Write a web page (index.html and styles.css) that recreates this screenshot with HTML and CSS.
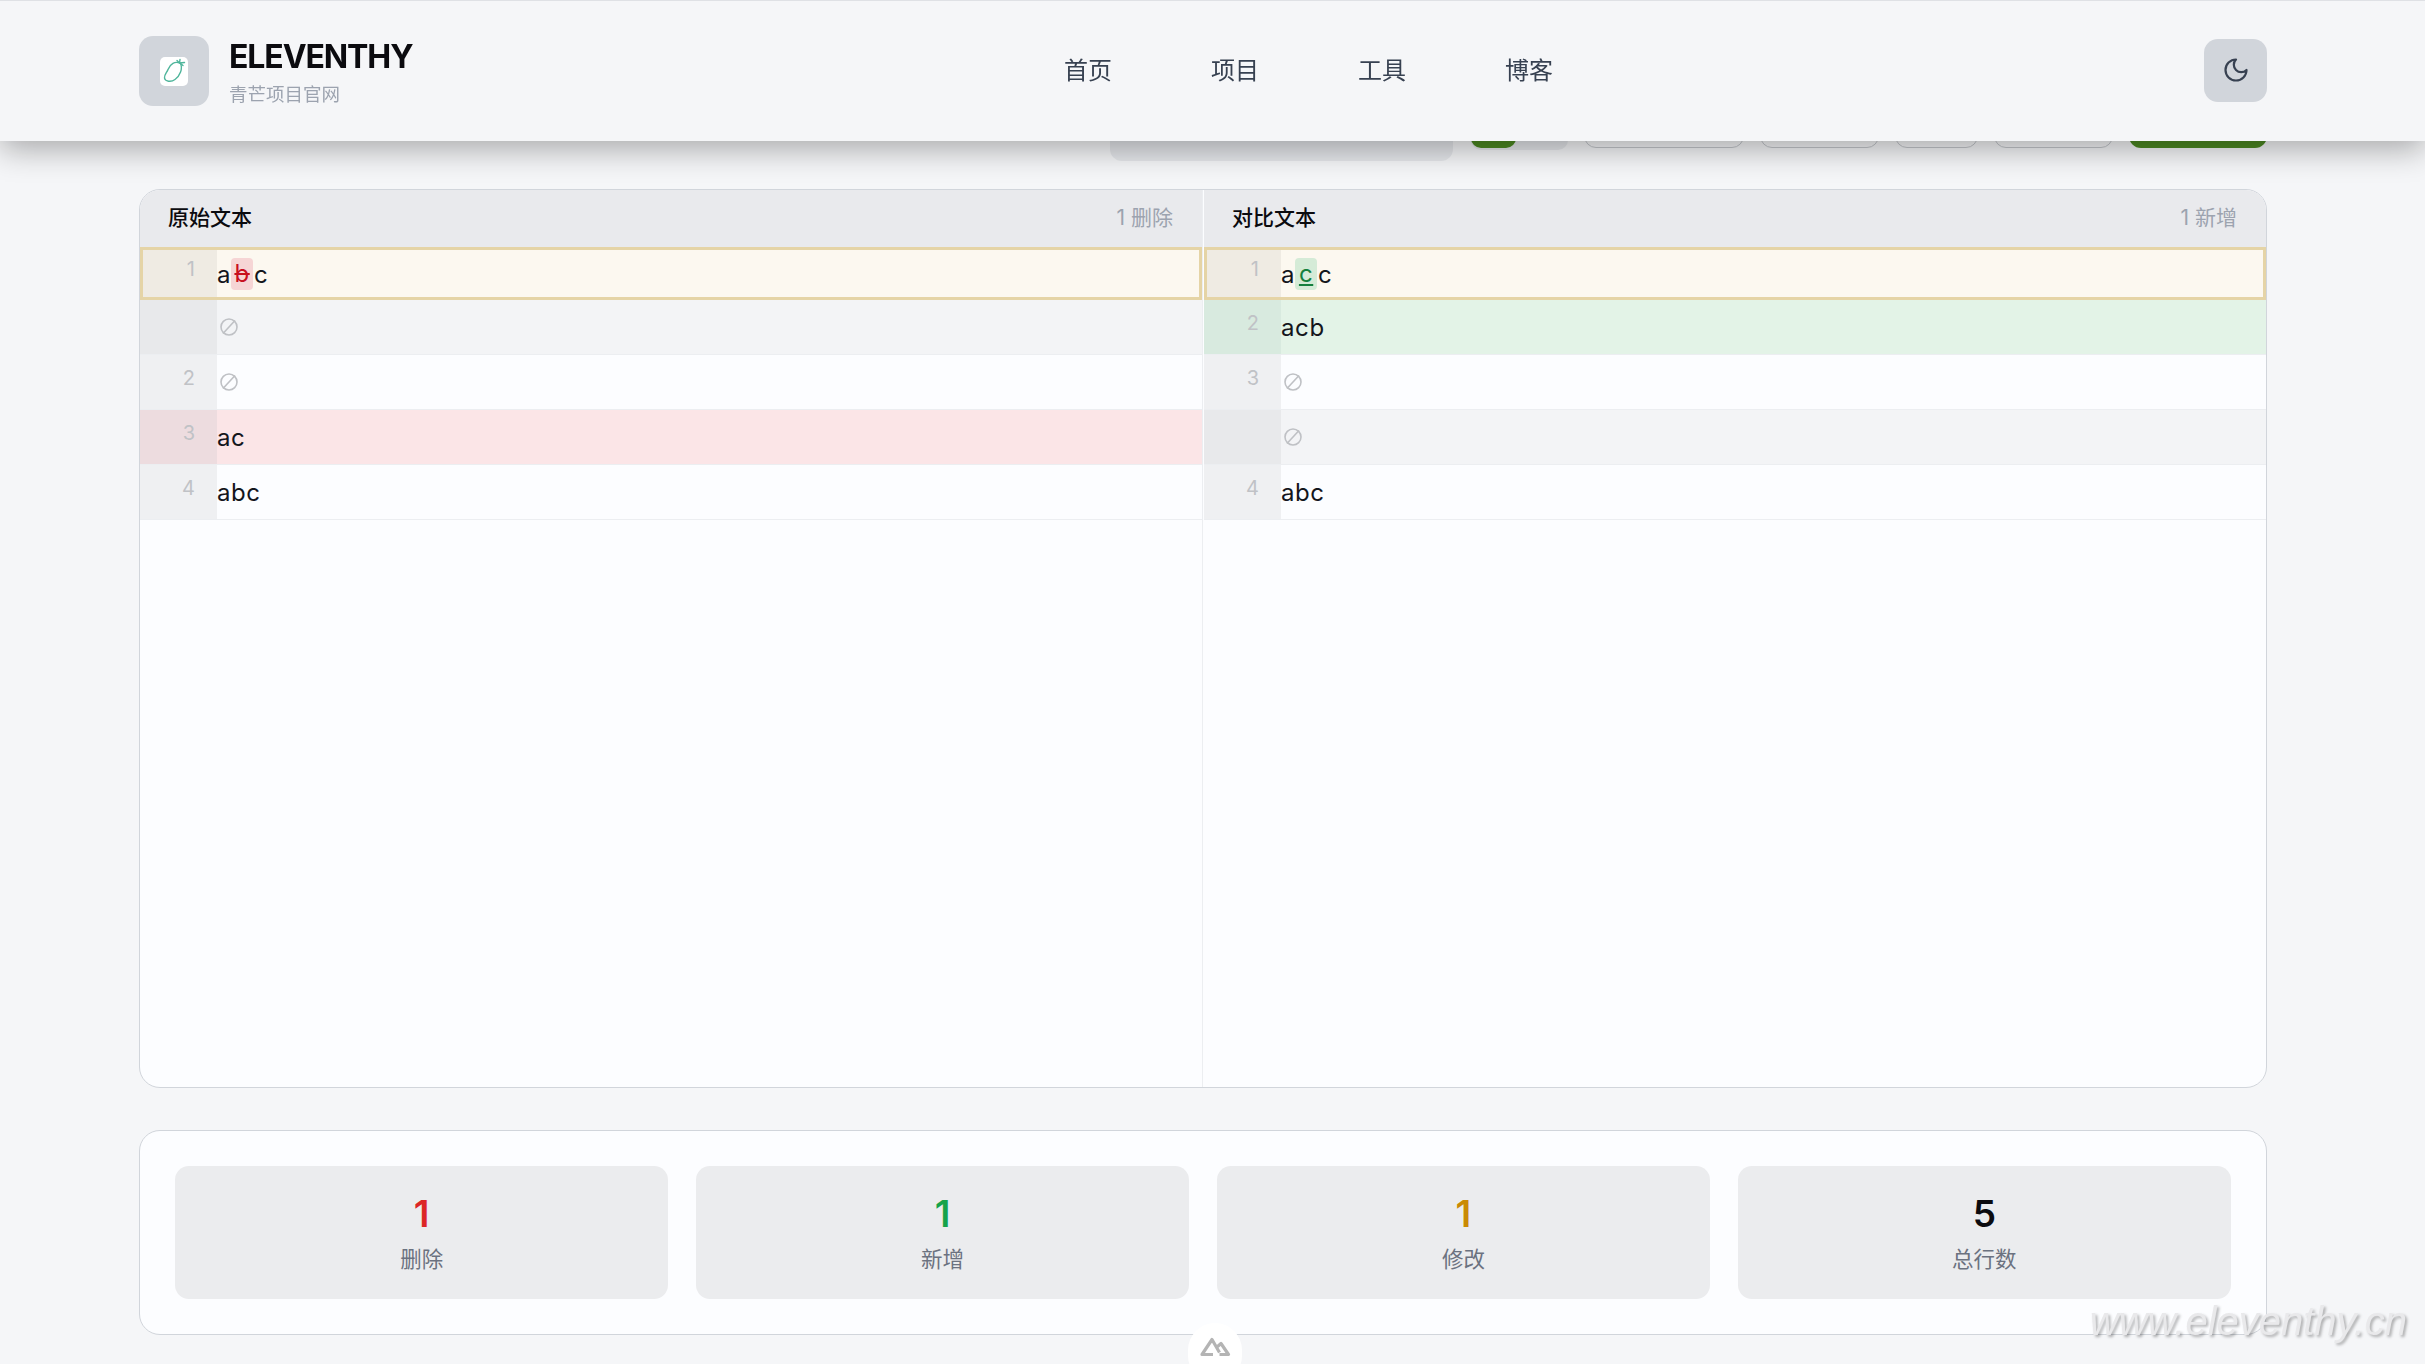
FILE: index.html
```html
<!DOCTYPE html>
<html lang="zh-CN">
<head>
  <meta charset="UTF-8">
  <meta name="viewport" content="width=device-width, initial-scale=1.0">
  <title>文本对比 - ELEVENTHY</title>
  <link rel="stylesheet" href="styles.css">
</head>
<body>

<header class="site-header">
  <div class="brand">
    <div class="logo">
      <span class="logo-tile">
        <svg viewBox="0 0 28 28" width="28" height="28" fill="none" stroke="#4fb59b" stroke-width="1.4" stroke-linecap="round" stroke-linejoin="round">
          <path d="M20.5 6.5C15 3.5 10 7 8 12.5c-1 3-4 5.500-3.500 8.500.5 3.500 6.500 4.500 10.500 1.500 5-3.500 8-11 5.500-16z"/>
          <path d="M17 3.500l2.500 2.500 5-.5M20 6l3 2.500M19.500 6l.5-3.500"/>
        </svg>
      </span>
    </div>
    <div class="brand-text">
      <div class="brand-name">ELEVENTHY</div>
      <div class="brand-sub">青芒项目官网</div>
    </div>
  </div>
  <nav class="nav">
    <a>首页</a>
    <a>项目</a>
    <a>工具</a>
    <a>博客</a>
  </nav>
  <button class="theme-btn">
    <svg viewBox="0 0 24 24" width="28" height="28" fill="none" stroke="#374151" stroke-width="1.900" stroke-linecap="round" stroke-linejoin="round">
      <path d="M12 3a6 6 0 0 0 9 9 9 9 0 1 1-9-9Z"/>
    </svg>
  </button>
</header>

<main class="page">
  <!-- toolbar, mostly under the header -->
  <div class="toolbar">
    <div class="tb-select"></div>
    <div class="tb-switch"><span class="tb-on"></span><span class="tb-off"></span></div>
    <div class="tb-pill w160"></div>
    <div class="tb-pill w119"></div>
    <div class="tb-pill w83"></div>
    <div class="tb-pill w119"></div>
    <div class="tb-primary"></div>
  </div>

  <section class="diff">
    <div class="diff-col">
      <div class="diff-head">
        <span class="diff-title">原始文本</span>
        <span class="diff-count">1 删除</span>
      </div>
      <div class="row modified"><span class="num">1</span><span class="code">a<del class="del">b</del>c</span></div>
      <div class="row empty"><span class="num"></span><span class="code"><svg class="none" viewBox="0 0 18 18"><circle cx="9" cy="9" r="8"/><path d="M3 15.500 15 2.500"/></svg></span></div>
      <div class="row"><span class="num">2</span><span class="code"><svg class="none" viewBox="0 0 18 18"><circle cx="9" cy="9" r="8"/><path d="M3 15.500 15 2.500"/></svg></span></div>
      <div class="row removed"><span class="num">3</span><span class="code">ac</span></div>
      <div class="row"><span class="num">4</span><span class="code">abc</span></div>
    </div>
    <div class="diff-col">
      <div class="diff-head">
        <span class="diff-title">对比文本</span>
        <span class="diff-count">1 新增</span>
      </div>
      <div class="row modified"><span class="num">1</span><span class="code">a<ins class="ins">c</ins>c</span></div>
      <div class="row added"><span class="num">2</span><span class="code">acb</span></div>
      <div class="row"><span class="num">3</span><span class="code"><svg class="none" viewBox="0 0 18 18"><circle cx="9" cy="9" r="8"/><path d="M3 15.500 15 2.500"/></svg></span></div>
      <div class="row empty"><span class="num"></span><span class="code"><svg class="none" viewBox="0 0 18 18"><circle cx="9" cy="9" r="8"/><path d="M3 15.500 15 2.500"/></svg></span></div>
      <div class="row"><span class="num">4</span><span class="code">abc</span></div>
    </div>
  </section>

  <section class="stats">
    <div class="stat"><div class="stat-num red">1</div><div class="stat-label">删除</div></div>
    <div class="stat"><div class="stat-num green">1</div><div class="stat-label">新增</div></div>
    <div class="stat"><div class="stat-num amber">1</div><div class="stat-label">修改</div></div>
    <div class="stat"><div class="stat-num">5</div><div class="stat-label">总行数</div></div>
  </section>
</main>

<div class="devtools">
  <svg viewBox="0 0 32 22" width="32" height="22" fill="none" stroke="#b4b4b4" stroke-width="3.200" stroke-linejoin="round">
    <path d="M14 18.500H3L13 3.500 20.500 16.500M18 11 22 7.500 29.500 18.500H20.500"/>
  </svg>
</div>
<div class="watermark">www.eleventhy.cn</div>

</body>
</html>
```

FILE: styles.css
```css
* { box-sizing: border-box; }
html, body { height: 100%; overflow: hidden; }
body {
  margin: 0;
  background: #f5f6f8;
  color: #0b0b0f;
  font-family: Inter, "Noto Sans CJK SC", sans-serif;
}

.site-header {
  position: fixed;
  top: 0;
  left: 0;
  right: 0;
  z-index: 10;
  height: 141px;
  padding: 0 158px 0 139px;
  display: flex;
  align-items: center;
  background: #f5f6f8;
  border-top: 1px solid #dfe1e5;
  box-shadow: 0 8px 30px rgba(0, 0, 0, .32);
}
.brand { display: flex; align-items: center; gap: 20px; width: 925px; }
.logo {
  width: 70px;
  height: 70px;
  border-radius: 14px;
  background: #d1d5db;
  display: flex;
  align-items: center;
  justify-content: center;
}
.logo-tile {
  width: 28px;
  height: 29px;
  background: #fff;
  border-radius: 5px;
  display: flex;
}
.brand-text { padding-top: 1px; }
.brand-name { font-size: 32px; font-weight: 700; line-height: 38px; letter-spacing: -1.1px; }
.brand-sub { font-size: 18.500px; line-height: 24px; color: #9ca3af; margin-top: 6px; }
.nav { display: flex; gap: 99px; margin-top: -5px; }
.nav a { font-size: 24px; color: #374151; }
.theme-btn {
  margin-left: auto;
  width: 63px;
  height: 63px;
  margin-top: -2px;
  border: 0;
  border-radius: 14px;
  background: #d1d5db;
  display: flex;
  align-items: center;
  justify-content: center;
  padding: 0;
}

.page { padding: 100px 158px 0 139px; }

.toolbar { display: flex; justify-content: flex-end; align-items: flex-start; gap: 16px; height: 61px; margin-bottom: 28px; }
.tb-select { width: 343px; height: 61px; background: #e5e7eb; border-radius: 12px; margin-right: 2px; }
.tb-switch { display: flex; width: 97px; height: 50px; background: #e5e7eb; border-radius: 10px; }
.tb-on { width: 45px; height: 48px; background: #4d8a22; border-radius: 10px; }
.tb-pill { height: 48px; border: 1px solid #c4c7cc; border-radius: 12px; }
.w160 { width: 160px; }
.w119 { width: 119px; }
.w83 { width: 83px; }
.tb-primary { width: 138px; height: 48px; background: #4d8a22; border-radius: 12px; }

.diff {
  display: grid;
  grid-template-columns: 1fr 1fr;
  height: 899px;
  background: #fcfdff;
  border: 1px solid #d1d5db;
  border-radius: 21px;
  overflow: hidden;
}
.diff-col:first-child { border-right: 1px solid #eceef1; }
.diff-col:last-child { padding-left: 1px; }
.diff-head {
  height: 57px;
  padding: 0 29px 5px 28px;
  display: flex;
  justify-content: space-between;
  align-items: center;
  background: #e9eaed;
}
.diff-title { font-size: 21px; font-weight: 500; }
.diff-count { font-size: 21px; color: #9ca3af; }

.row {
  display: flex;
  height: 55px;
  border-bottom: 1px solid #eceef1;
}
.num {
  width: 77px;
  flex: none;
  padding: 9px 22px 0 0;
  text-align: right;
  font-size: 20px;
  line-height: 28px;
  color: #c0c2c6;
  background: #eff0f2;
}
.code {
  display: flex;
  align-items: center;
  font-size: 24px;
  letter-spacing: .6px;
  padding-top: 1px;
  color: #14161c;
}
.none { width: 18px; height: 18px; margin: -2px 0 0 3px; fill: none; stroke: #bfc1c5; stroke-width: 1.600; }

.row.modified { height: 53px; background: #fcf8f0; box-shadow: inset 0 0 0 3px #e5d4a6; border-bottom: 0; }
.row.modified .num { background: rgba(0, 0, 0, .05); margin: 3px 0 3px 3px; width: 74px; padding-top: 5px; }
.row.empty { background: #f3f4f6; }
.row.empty .num { background: #e8e9eb; }
.row.removed { background: #fbe5e7; }
.row.removed .num { background: #eddcdf; }
.row.added { background: #e3f3e7; }
.row.added .num { background: #d8eadf; }

.del, .ins {
  display: block;
  width: 22px;
  height: 32px;
  margin: 0 1px 0 0;
  line-height: 32px;
  text-align: center;
  border-radius: 4px;
}
.del { background: #f6d5d5; color: #c8101e; text-decoration: line-through; }
.ins { background: #d5ebd7; color: #15803d; text-decoration: underline; }

.stats {
  margin-top: 42px;
  padding: 35px;
  display: grid;
  grid-template-columns: repeat(4, 1fr);
  gap: 27.500px;
  height: 205px;
  background: #fcfdff;
  border: 1px solid #d1d5db;
  border-radius: 21px;
}
.stat {
  background: #ebecee;
  border-radius: 14px;
  text-align: center;
  padding-top: 25px;
}
.stat-num { font-size: 37px; font-weight: 600; line-height: 45px; }
.stat-label { font-size: 21.500px; line-height: 28px; color: #6b7280; margin-top: 9px; }
.red { color: #dc2626; }
.green { color: #16a34a; }
.amber { color: #ca8a04; }

.devtools {
  position: fixed;
  left: 1188px;
  top: 1323px;
  width: 54px;
  height: 60px;
  border-radius: 27px;
  background: #fff;
  display: flex;
  justify-content: center;
  padding-top: 13px;
}
.watermark {
  position: fixed;
  right: 18px;
  top: 1299px;
  font-family: "Liberation Sans", sans-serif;
  font-style: italic;
  font-size: 40px;
  color: #e9e9eb;
  text-shadow: 2px 2px 3px rgba(0, 0, 0, .3);
}
```
